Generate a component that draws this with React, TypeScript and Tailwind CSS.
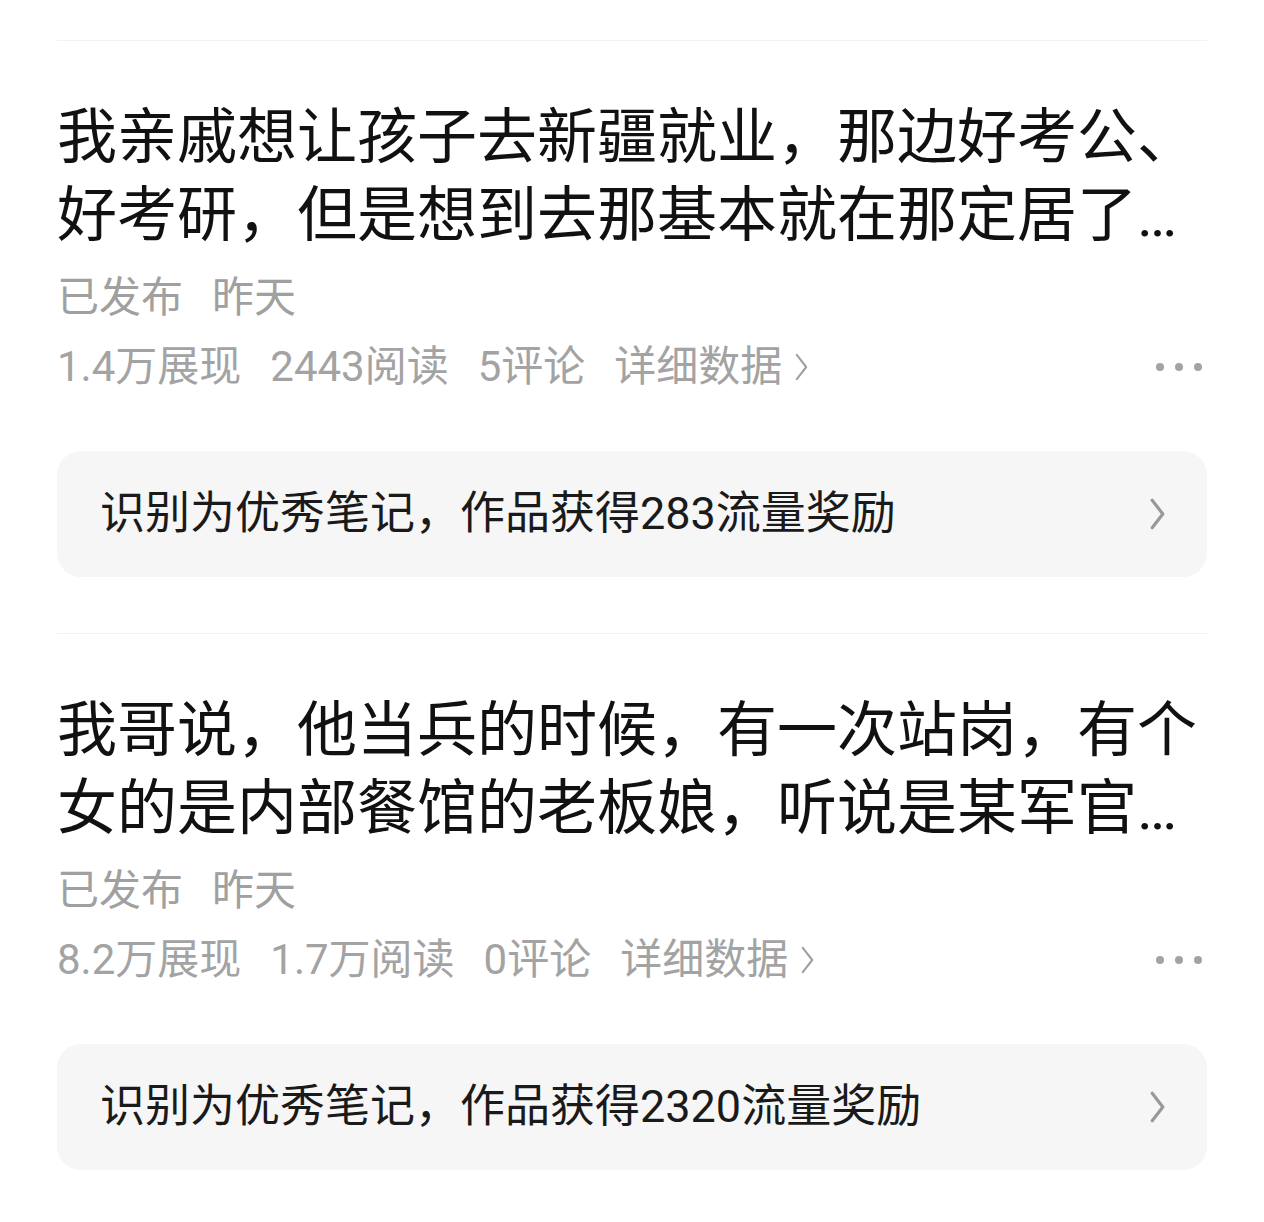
const posts = [
  {
    title:
      '我亲戚想让孩子去新疆就业，那边好考公、好考研，但是想到去那基本就在那定居了，以后见面的机会就少了，大家觉得怎么样？',
    status: '已发布',
    time: '昨天',
    views: '1.4万展现',
    reads: '2443阅读',
    comments: '5评论',
    reward: '识别为优秀笔记，作品获得283流量奖励',
  },
  {
    title:
      '我哥说，他当兵的时候，有一次站岗，有个女的是内部餐馆的老板娘，听说是某军官的家属，每次进出都不看证件。',
    status: '已发布',
    time: '昨天',
    views: '8.2万展现',
    reads: '1.7万阅读',
    comments: '0评论',
    reward: '识别为优秀笔记，作品获得2320流量奖励',
  },
];

function Chevron({ className, width = 2.6 }: { className?: string; width?: number }) {
  return (
    <svg viewBox="0 0 16 32" className={className} fill="none" stroke="currentColor" strokeWidth={width} strokeLinecap="round" strokeLinejoin="round">
      <path d="M3 3 L13 16 L3 29" />
    </svg>
  );
}

function PostCard({ post }: { post: (typeof posts)[number] }) {
  return (
    <section className="border-t border-[#f1f1f1] pt-[58px] pb-[56px]">
      {/* Title */}
      <h2 className="text-[60px] leading-[78px] text-[#111] font-normal line-clamp-2">
        {post.title}
      </h2>

      {/* Status */}
      <div className="mt-[15px] flex gap-[29px] text-[42px] leading-[56px] text-[#a0a0a0]">
        <span>{post.status}</span>
        <span>{post.time}</span>
      </div>

      {/* Stats */}
      <div className="mt-[13px] flex items-center justify-between text-[42px] leading-[56px] text-[#a3a3a3]">
        <div className="flex items-center gap-[29px]">
          <span>{post.views}</span>
          <span>{post.reads}</span>
          <span>{post.comments}</span>
          <span className="flex items-center gap-[12px]">
            详细数据
            <Chevron className="w-[15px] h-[30px] text-[#a0a0a0]" width={2.2} />
          </span>
        </div>
        <div className="flex items-center gap-[11px] pr-[5px]">
          <span className="w-[8px] h-[8px] rounded-full bg-[#a3a3a3]" />
          <span className="w-[8px] h-[8px] rounded-full bg-[#a3a3a3]" />
          <span className="w-[8px] h-[8px] rounded-full bg-[#a3a3a3]" />
        </div>
      </div>

      {/* Reward */}
      <div className="mt-[56px] h-[126px] rounded-[24px] bg-[#f6f6f6] flex items-center justify-between pl-[43px] pr-[41px]">
        <span className="text-[45px] leading-[60px] text-[#1a1a1a]">{post.reward}</span>
        <Chevron className="w-[17px] h-[34px] text-[#999]" width={3} />
      </div>
    </section>
  );
}

export default function App() {
  return (
    <div
      className="w-[1264px] min-h-[1222px] bg-white pt-[40px] px-[57px]"
      style={{ fontFamily: 'Roboto, "Noto Sans CJK SC", sans-serif' }}
    >
      {posts.map((p, i) => (
        <PostCard key={i} post={p} />
      ))}
    </div>
  );
}
